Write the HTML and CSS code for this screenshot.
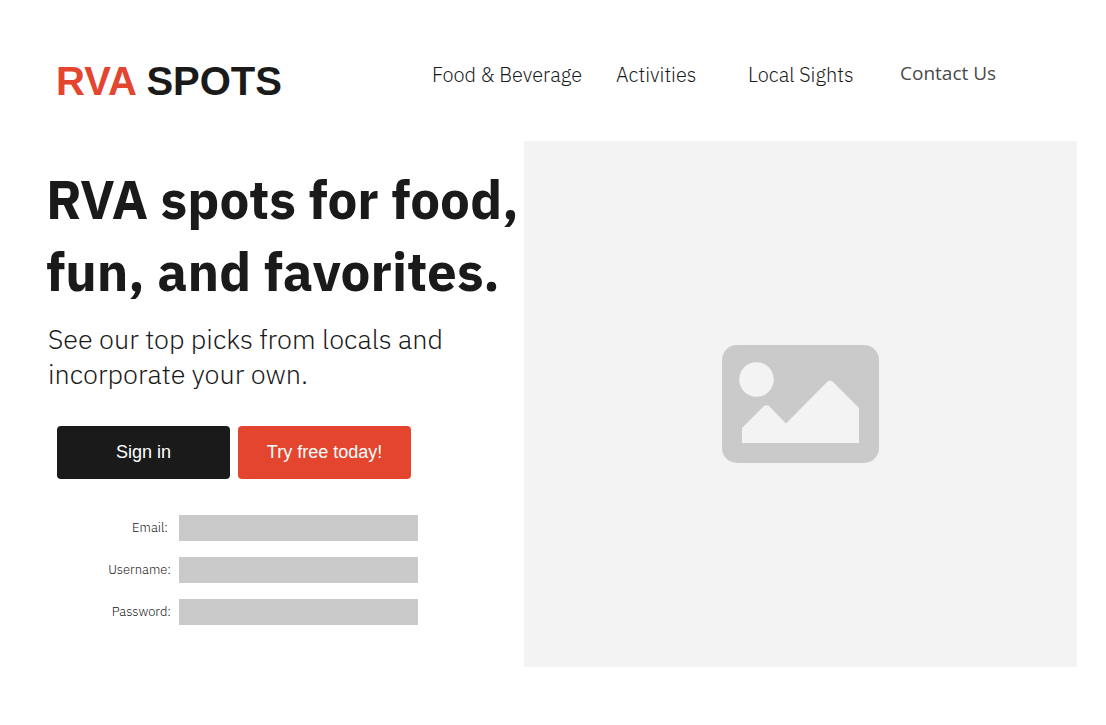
FILE: index.html
```html
<!DOCTYPE html>
<html lang="en">
<head>
<meta charset="utf-8">
<meta name="viewport" content="width=device-width, initial-scale=1">
<title>RVA Spots</title>
<link rel="stylesheet" href="styles.css">
</head>
<body>
<header class="site-header">
  <div class="logo"><span class="logo-accent">RVA</span> SPOTS</div>
  <nav class="nav">
    <a class="nav-link nav-food" href="#">Food &amp; Beverage</a>
    <a class="nav-link nav-activities" href="#">Activities</a>
    <a class="nav-link nav-sights" href="#">Local Sights</a>
    <a class="nav-link nav-contact" href="#">Contact Us</a>
  </nav>
</header>
<main class="hero">
  <section class="intro">
    <h1 class="title">RVA spots for food,<br>fun, and favorites.</h1>
    <p class="lead">See our top picks from locals and<br>incorporate your own.</p>
    <div class="actions">
      <button class="button" type="button">Sign in</button>
      <button class="button button-accent" type="button">Try free today!</button>
    </div>
    <form class="form">
      <label class="label label-email" for="email">Email:</label>
      <input class="field" id="email" type="email">
      <label class="label" for="username">Username:</label>
      <input class="field" id="username" type="text">
      <label class="label" for="password">Password:</label>
      <input class="field" id="password" type="password">
    </form>
  </section>
  <div class="picture">
    <svg class="picture-icon" viewBox="0 0 157 118" role="img" aria-label="Image placeholder">
      <rect width="157" height="118" rx="15" fill="#cacaca"/>
      <circle cx="34.500" cy="34.500" r="17.300" fill="#f3f3f3"/>
      <path d="M20 98V83L41.500 61.500Q44.500 59 47.500 61.500L64 78.500L105 37Q108 34 111 37L137 63V98Z" fill="#f3f3f3"/>
    </svg>
  </div>
</main>
</body>
</html>
```
FILE: styles.css
```css
* {
  box-sizing: border-box;
}

body {
  margin: 0;
  background: #fff;
  color: #1a1a1a;
  font-family: "IBM Plex Sans", "Open Sans", sans-serif;
}

.site-header {
  display: flex;
  align-items: flex-start;
  padding: 56px 29px 0 56px;
  height: 141px;
}

.logo {
  flex: 0 0 376px;
  font: bold 40px/50px "Liberation Sans", Arial, sans-serif;
}

.logo-accent {
  color: #e4452f;
}

.nav {
  display: flex;
  padding-top: 6px;
}

.nav-link {
  color: inherit;
  font-size: 20px;
  font-weight: 300;
  line-height: 26px;
  text-decoration: none;
  white-space: nowrap;
}

.nav-food {
  flex: 0 0 184px;
}

.nav-activities {
  flex: 0 0 132px;
}

.nav-sights {
  flex: 0 0 152px;
}

.nav-contact {
  color: #4a4a4a;
  font-family: "Open Sans", sans-serif;
  font-size: 19px;
  font-weight: 400;
  line-height: 22px;
}

.hero {
  display: grid;
  grid-template-columns: minmax(0, 478fr) minmax(0, 553fr);
  padding: 0 29px 58px 46px;
}

.intro {
  padding-top: 23px;
}

.title {
  margin: 0;
  font-size: 53px;
  font-weight: 700;
  line-height: 72px;
  white-space: nowrap;
}

.lead {
  margin: 13px 0 0 2px;
  font-size: 27px;
  font-weight: 300;
  line-height: 35px;
}

.actions {
  display: flex;
  gap: 8px;
  margin: 35px 0 0 11px;
}

.button {
  width: 173px;
  height: 53px;
  border: 0;
  border-radius: 4px;
  background: #1a1a1a;
  color: #fff;
  font: 18px "Liberation Sans", Arial, sans-serif;
}

.button-accent {
  background: #e4452f;
}

.form {
  display: grid;
  grid-template-columns: 125px 239px;
  column-gap: 8px;
  row-gap: 16px;
  align-items: center;
  margin-top: 36px;
}

.label {
  font-size: 13px;
  font-weight: 300;
  line-height: 16px;
  text-align: right;
}

.label-email {
  padding-right: 3px;
}

.field {
  width: 100%;
  height: 26px;
  border: 0;
  padding: 0 8px;
  background: #cacaca;
}

.picture {
  display: flex;
  align-items: center;
  justify-content: center;
  min-height: 526px;
  background: #f3f3f3;
}

.picture-icon {
  width: 157px;
  height: 118px;
}
```
